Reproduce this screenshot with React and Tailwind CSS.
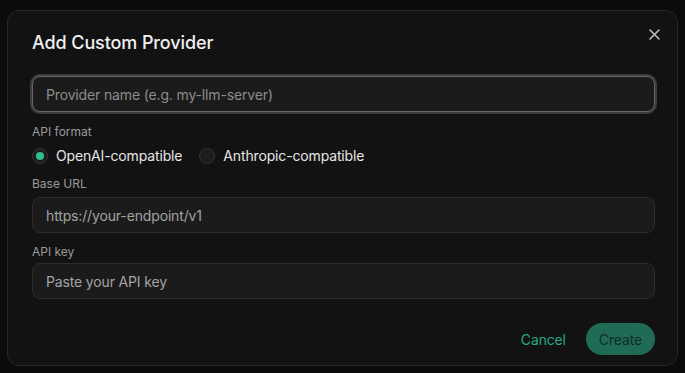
import { useState } from "react";

function Radio({ checked, label, onClick }) {
  return (
    <button type="button" onClick={onClick} className="flex items-center gap-2">
      <span className="flex h-4 w-4 items-center justify-center rounded-full border border-[#333] bg-[#1d1d1d]">
        {checked && <span className="h-2 w-2 rounded-full bg-[#2fbf8f]" />}
      </span>
      <span className="text-[14px] tracking-[-0.15px] text-[#e6e6e6]">{label}</span>
    </button>
  );
}

export default function App() {
  const [format, setFormat] = useState("openai");
  const [form, setForm] = useState({ name: "", url: "", key: "" });

  return (
    <div
      className="h-[373px] w-[685px] overflow-hidden bg-[#0b0b0b] pl-[7px] pt-[10px]"
      style={{ fontFamily: "Inter, 'Noto Sans', sans-serif" }}
    >
      <div className="relative w-[671px] rounded-[12px] border border-[#272727] bg-[#121212] pb-[10px] pl-6 pr-[22px] pt-[22px]">
        {/* close */}
        <button className="absolute right-[17px] top-[18px] text-[#bdbdbd]">
          <svg width="11" height="11" viewBox="0 0 11 11" fill="none" stroke="currentColor" strokeWidth="1.6" strokeLinecap="round">
            <path d="M1 1l9 9M10 1l-9 9" />
          </svg>
        </button>

        <h2 className="text-[18px] font-medium leading-[20px] tracking-[-0.1px] text-[#f0f0f0]">Add Custom Provider</h2>

        <input
          autoFocus
          value={form.name}
          onChange={(e) => setForm({ ...form, name: e.target.value })}
          placeholder="Provider name (e.g. my-llm-server)"
          className="mt-[23px] h-[36px] w-full rounded-[8px] border border-[#666] bg-[#1b1b1b] px-[13px] text-[14px] tracking-[-0.15px] text-[#e6e6e6] caret-white shadow-[0_0_0_2px_#3c3c3c] outline-none placeholder:text-[#8c8c8c]"
        />

        <div className="mt-[12px] text-[12px] leading-[16px] text-[#9a9a9a]">API format</div>
        <div className="mt-[5px] flex items-center gap-[17px]">
          <Radio checked={format === "openai"} label="OpenAI-compatible" onClick={() => setFormat("openai")} />
          <Radio checked={format === "anthropic"} label="Anthropic-compatible" onClick={() => setFormat("anthropic")} />
        </div>

        <div className="mt-[10px] text-[12px] leading-[16px] text-[#9a9a9a]">Base URL</div>
        <input
          value={form.url}
          onChange={(e) => setForm({ ...form, url: e.target.value })}
          placeholder="https://your-endpoint/v1"
          className="mt-[5px] h-[36px] w-full rounded-[8px] border border-[#2c2c2c] bg-[#1b1b1b] px-[13px] text-[14px] tracking-[-0.15px] text-[#e6e6e6] outline-none placeholder:text-[#a3a3a3]"
        />

        <div className="mt-[11px] text-[12px] leading-[16px] text-[#9a9a9a]">API key</div>
        <input
          value={form.key}
          onChange={(e) => setForm({ ...form, key: e.target.value })}
          placeholder="Paste your API key"
          className="mt-[3px] h-[36px] w-full rounded-[8px] border border-[#2c2c2c] bg-[#1b1b1b] px-[13px] text-[14px] tracking-[-0.15px] text-[#e6e6e6] outline-none placeholder:text-[#a3a3a3]"
        />

        <div className="mt-[24px] flex items-center justify-end gap-5">
          <button className="text-[14px] tracking-[-0.15px] text-[#2aa883]">Cancel</button>
          <button className="h-[32px] rounded-full bg-[#1f6b55] px-[13px] text-[14px] tracking-[-0.15px] text-[#0f2e25]">Create</button>
        </div>
      </div>
    </div>
  );
}
